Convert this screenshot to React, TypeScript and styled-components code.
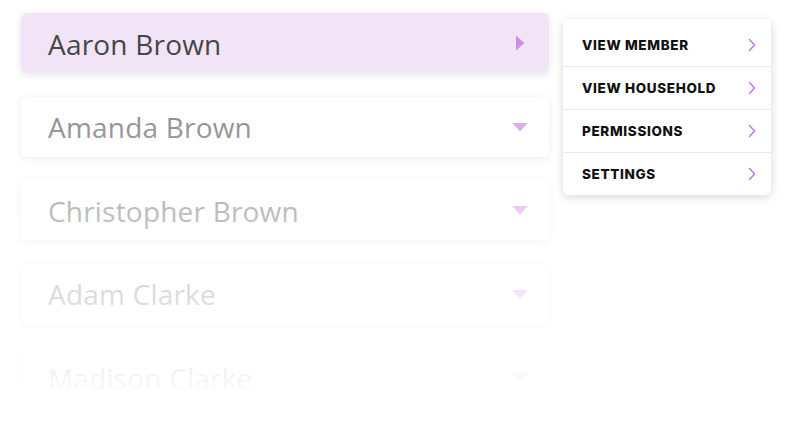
import React from "react"
import styled, { createGlobalStyle } from "styled-components"

const GlobalStyle = createGlobalStyle`
  html, body {
    margin: 0;
    padding: 0;
    background: #ffffff;
  }
  body {
    font-family: "Open Sans", "Liberation Sans", sans-serif;
  }
`

const Page = styled.main`
  display: flex;
  align-items: flex-start;
  gap: 14px;
  padding: 13px 0 0 21px;
  height: 424px;
  box-sizing: border-box;
  overflow: hidden;
`

const ListColumn = styled.div`
  position: relative;
  display: flex;
  flex-direction: column;
  gap: 23.5px;
  width: 528px;

  &::after {
    content: "";
    position: absolute;
    left: -21px;
    right: -10px;
    top: -13px;
    height: 424px;
    pointer-events: none;
    background: linear-gradient(
      to bottom,
      rgba(255, 255, 255, 0) 95px,
      rgba(255, 255, 255, 0.1) 128px,
      rgba(255, 255, 255, 0.43) 211px,
      rgba(255, 255, 255, 0.7) 295px,
      rgba(255, 255, 255, 0.88) 370px,
      rgba(255, 255, 255, 1) 400px
    );
  }
`

const Card = styled.div<{ $active?: boolean }>`
  display: flex;
  align-items: center;
  justify-content: space-between;
  height: 60px;
  padding: 0 21px 0 27px;
  border-radius: 6px;
  background: ${p => (p.$active ? "#f2e4f7" : "#ffffff")};
  box-shadow: 0 2px 9px rgba(0, 0, 0, ${p => (p.$active ? 0.1 : 0.09)});
  flex-shrink: 0;
`

const Name = styled.span<{ $active?: boolean }>`
  font-size: 28px;
  font-weight: 400;
  line-height: 1;
  margin-top: 1px;
  letter-spacing: 0.2px;
  color: ${p => (p.$active ? "#474747" : "#8a8a8a")};
`

const Menu = styled.nav`
  display: flex;
  flex-direction: column;
  width: 208px;
  margin-top: 6px;
  padding: 5px 0 0;
  background: #ffffff;
  border-radius: 6px;
  box-shadow: 0 2px 10px rgba(0, 0, 0, 0.16);
  overflow: hidden;
`

const MenuItem = styled.div`
  display: flex;
  align-items: center;
  justify-content: space-between;
  height: 43px;
  box-sizing: border-box;
  padding: 0 14px 0 19px;
  border-top: 1px solid #ebe6ee;
  font-family: "Inter", "Liberation Sans", sans-serif;
  font-size: 13.5px;
  font-weight: 800;
  letter-spacing: 0.65px;
  color: #111111;

  &:first-child {
    border-top: none;
    height: 42px;
  }
`

const Triangle = ({ dir }: { dir: "right" | "down" }) =>
  dir === "right" ? (
    <svg width="16" height="16" viewBox="0 0 16 16">
      <path d="M4 0.5 L12.5 8 L4 15.5 Z" fill="#cf8ee4" />
    </svg>
  ) : (
    <svg width="16" height="10" viewBox="0 0 16 10">
      <path d="M0 1 L16 1 L8 9.5 Z" fill="#d9a6eb" />
    </svg>
  )

const Chevron = () => (
  <svg width="10" height="14" viewBox="0 0 10 14">
    <path d="M2.5 1.5 L7.5 7 L2.5 12.5" fill="none" stroke="#c27ddc" strokeWidth="1.6" strokeLinecap="round" strokeLinejoin="round" />
  </svg>
)

const members = ["Aaron Brown", "Amanda Brown", "Christopher Brown", "Adam Clarke", "Madison Clarke"]
const actions = ["View Member", "View Household", "Permissions", "Settings"]

export default function App() {
  return (
    <Page>
      <GlobalStyle />
      <ListColumn>
        {members.map((name, i) => (
          <Card key={name} $active={i === 0}>
            <Name $active={i === 0}>{name}</Name>
            <Triangle dir={i === 0 ? "right" : "down"} />
          </Card>
        ))}
      </ListColumn>
      <Menu>
        {actions.map(a => (
          <MenuItem key={a}>
            {a.toUpperCase()}
            <Chevron />
          </MenuItem>
        ))}
      </Menu>
    </Page>
  )
}
